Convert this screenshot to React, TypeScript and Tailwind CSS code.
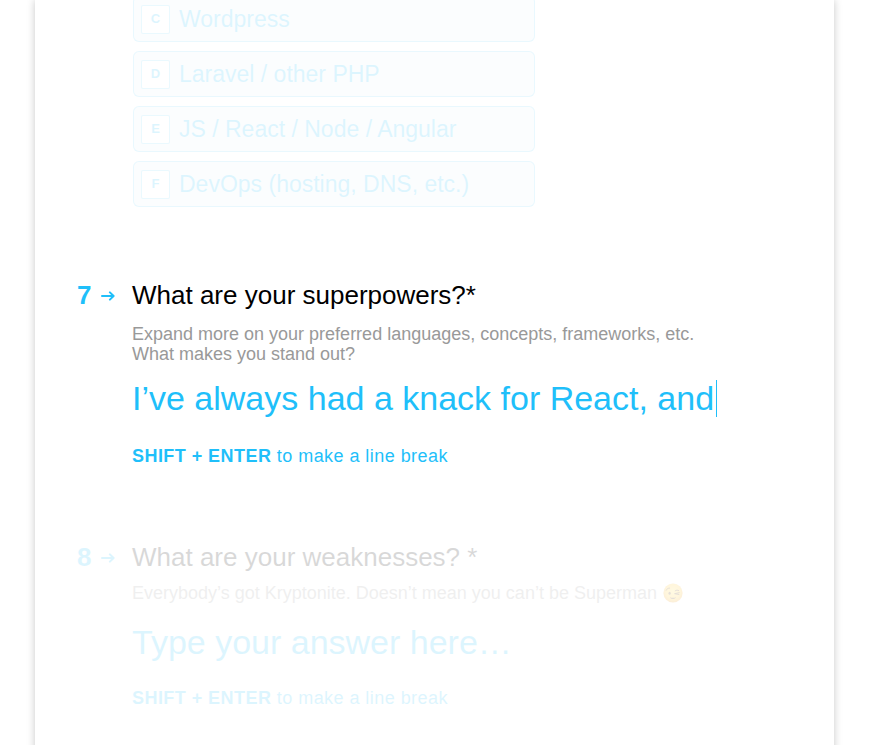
const options = [
  { letter: "C", label: "Wordpress" },
  { letter: "D", label: "Laravel / other PHP" },
  { letter: "E", label: "JS / React / Node / Angular" },
  { letter: "F", label: "DevOps (hosting, DNS, etc.)" },
];

function Arrow() {
  return (
    <svg
      className="mt-0.5 h-[10px] w-[14px]"
      viewBox="0 0 14 10"
      fill="none"
      stroke="currentColor"
      strokeWidth="2"
      strokeLinecap="round"
      strokeLinejoin="round"
      aria-hidden="true"
    >
      <path d="M1 5H12.4M8.9 1.4L12.6 5L8.9 8.6" />
    </svg>
  );
}

function Wink() {
  return (
    <svg className="ml-1.5 inline-block size-5 align-[-4px]" viewBox="0 0 20 20" role="img" aria-label="Winking face">
      <defs>
        <radialGradient id="face" cx="50%" cy="42%" r="60%">
          <stop offset="0%" stopColor="#ffe04a" />
          <stop offset="65%" stopColor="#ffc21c" />
          <stop offset="100%" stopColor="#e88a00" />
        </radialGradient>
      </defs>
      <circle cx="10" cy="10" r="9.6" fill="url(#face)" />
      <ellipse cx="6.6" cy="10.2" rx="1.1" ry="1.5" fill="#5a3206" />
      <g fill="none" stroke="#5a3206" strokeWidth="1" strokeLinecap="round" strokeLinejoin="round">
        <path d="M3.2 7.2C3.8 5.9 5 5.1 6.5 5.1" />
        <path d="M12.2 7.8C13.3 7 14.5 7 15.6 7.5" />
        <path d="M16.2 9.7L11.6 10.7L15.9 11.5" />
      </g>
      <path d="M6.8 14.2C8.4 15 11.4 15 13 14.2C12.4 16.6 7.4 16.6 6.8 14.2Z" fill="#5a3206" />
    </svg>
  );
}

function QuestionTitle({ number, title, id }: { number: number; title: string; id: string }) {
  return (
    <div className="flex items-center text-[26px] leading-8">
      <div className="flex w-[55px] shrink-0 items-center gap-[10px] text-[#1fbffa]">
        <span className="font-bold">{number}</span>
        <Arrow />
      </div>
      <label htmlFor={id} className="text-black">
        {title}
      </label>
    </div>
  );
}

function Hint() {
  return (
    <p className="text-lg leading-6 tracking-wide text-[#1fbffa]">
      <strong>SHIFT + ENTER</strong> to make a line break
    </p>
  );
}

export default function App() {
  return (
    <div className="h-screen overflow-hidden bg-white px-[35px] font-['Liberation_Sans',Arial,sans-serif]">
      <main className="flow-root min-h-[calc(100vh+40px)] bg-white pr-8 pl-[42px] shadow-[0_0_8px_rgba(0,0,0,0.22)]">
        <fieldset className="-mt-1 ml-14 flex max-w-[402px] flex-col gap-[9px] opacity-15">
          {options.map(({ letter, label }) => (
            <label
              key={letter}
              className="flex h-[46px] items-center gap-[9px] rounded-md border border-[#1fbffa]/60 bg-[#1f9ffa]/10 px-[7px] text-[23px] leading-7 text-[#1fbffa]"
            >
              <input type="checkbox" name="skills" value={letter} className="sr-only" />
              <span className="flex size-[29px] items-center justify-center rounded-xs border border-[#1fbffa]/60 bg-white text-[13px] leading-4 font-bold">
                {letter}
              </span>
              <span>{label}</span>
            </label>
          ))}
        </fieldset>

        <section className="mt-[72px]">
          <QuestionTitle number={7} title="What are your superpowers?*" id="superpowers" />
          <div className="ml-[55px]">
            <p className="mt-[13px] text-lg leading-5 text-[#999999]">
              Expand more on your preferred languages, concepts, frameworks, etc.
              <br />
              What makes you stand out?
            </p>
            <div className="mt-[14px] flex items-center">
              <textarea
                id="superpowers"
                rows={1}
                defaultValue="I’ve always had a knack for React, and"
                className="block field-sizing-content resize-none overflow-hidden text-[34px] leading-10 whitespace-pre text-[#1fbffa] caret-transparent outline-none"
              />
              <span className="ml-0.5 h-[37px] w-px bg-[#1fbffa]" aria-hidden="true" />
            </div>
            <div className="mt-[26px]">
              <Hint />
            </div>
          </div>
        </section>

        <section className="mt-[73px] opacity-15">
          <QuestionTitle number={8} title="What are your weaknesses? *" id="weaknesses" />
          <div className="ml-[55px]">
            <p className="mt-[10px] text-lg leading-5 text-[#999999]">
              Everybody’s got Kryptonite. Doesn’t mean you can’t be Superman
              <Wink />
            </p>
            <textarea
              id="weaknesses"
              rows={1}
              placeholder="Type your answer here…"
              className="mt-[19px] block w-full resize-none overflow-hidden text-[34px] leading-10 text-[#1fbffa] outline-none placeholder:text-[#1fbffa]"
            />
            <div className="mt-6">
              <Hint />
            </div>
          </div>
        </section>
      </main>
    </div>
  );
}
